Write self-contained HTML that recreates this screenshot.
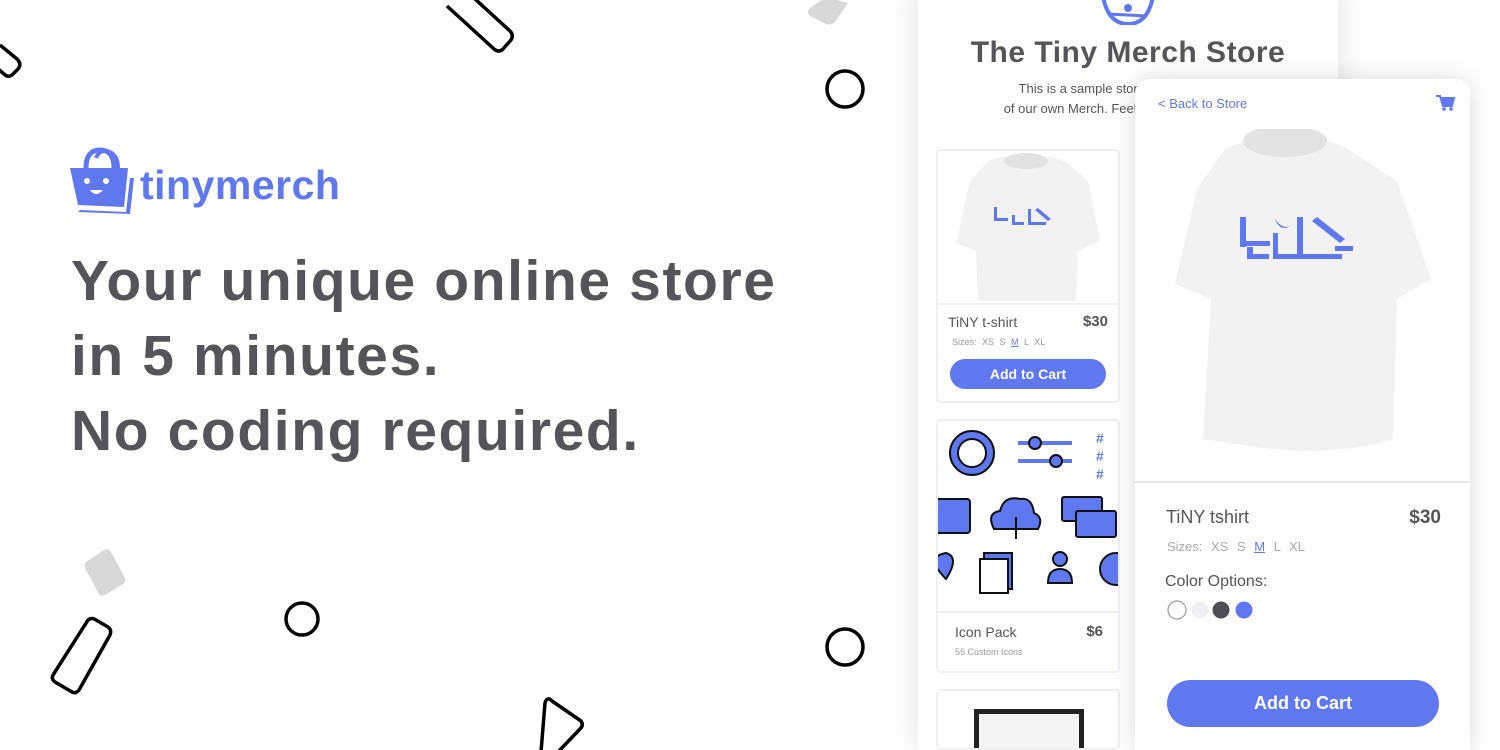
<!DOCTYPE html>
<html style="width:1500px;height:750px;overflow:hidden"><head><meta charset="utf-8"><style>
*{margin:0;padding:0;box-sizing:border-box}
body{width:1500px;height:750px;overflow:hidden;background:#fff;font-family:"Liberation Sans",sans-serif;color:#555459;position:relative}
.abs{position:absolute}
.h1{left:71px;top:244px;font-size:57px;font-weight:bold;line-height:75px;letter-spacing:1.6px;color:#555459}
.back{left:918px;top:-20px;width:420px;height:770px;background:#fff;box-shadow:0 0 30px rgba(0,0,0,.12);overflow:hidden}
.front{left:1135px;top:79px;width:335px;height:671px;background:#fff;border-radius:14px 14px 0 0;box-shadow:0 0 24px rgba(0,0,0,.14);overflow:hidden}
.pc{position:absolute;border:2px solid #f0f0f4;border-radius:5px;background:#fff;overflow:hidden}
.btn{background:#5f78f0;color:#fff;font-weight:bold;text-align:center}
</style></head><body>
<svg class="abs" style="left:0;top:0" width="1500" height="750">
<g fill="none" stroke="#000" stroke-width="3.5" stroke-linejoin="round">
<path d="M447 6 L494 49 Q499 53 503 49 L511 40 Q514 35 510 31 L463 -12"/>
<path d="M0 45 L17 59 Q22 64 18 69 L12 75 Q8 78 4 74 L-10 62"/>
<circle cx="845" cy="89" r="18"/>
<path d="M88 620 Q92 617 96 620 L108 627 Q112 630 110 635 L79 690 Q76 694 72 692 L55 682 Q51 679 53 675 Z"/>
<circle cx="302" cy="619" r="16"/>
<circle cx="845" cy="647" r="18"/>
<path d="M541 752 L545 703 Q547 696 552 701 L581 721 Q584 725 580 729 L558 752"/>
</g>
<path d="M810 8 L826 -3 L848 3 L835 22 Q831 26 826 24 L810 16 Q806 12 810 8Z" fill="#d8d8d8"/>
<path d="M86 562 L104 550 Q109 548 111 552 L125 578 Q126 582 123 584 L105 595 Q101 597 99 594 L85 568 Q84 565 86 562Z" fill="#d8d8d8"/>
<g fill="#5f78f0">
<path d="M70 168 L128 168 L124 207 L78 205 Z"/>
<path d="M80 210 L126 212 L130 178 L134 178 L130 214 L78 212Z"/>
<path d="M86 168 Q86 150 100 150 Q114 150 114 168" fill="none" stroke="#5f78f0" stroke-width="5"/>
<path d="M96 158 Q100 148 110 152 Q118 156 118 168" fill="none" stroke="#5f78f0" stroke-width="4"/>
<circle cx="87" cy="181" r="3" fill="#fff"/><circle cx="106" cy="181" r="3" fill="#fff"/>
<path d="M90 190 Q96 198 103 190Z" fill="#fff"/>
</g>
<text x="140" y="199" font-family="Liberation Sans" font-weight="bold" font-size="41" fill="#5f78f0" letter-spacing="0.5">tinymerch</text>
</svg>
<div class="abs h1">Your unique online store<br>in 5 minutes.<br>No coding required.</div>

<div class="abs back">
<svg class="abs" style="left:180px;top:0" width="60" height="45"><path d="M4 10 Q8 44 30 44 Q52 44 56 10" fill="none" stroke="#5f78f0" stroke-width="4"/><circle cx="30" cy="28" r="4" fill="#5f78f0"/><path d="M10 34 L48 36" stroke="#5f78f0" stroke-width="3"/></svg>
<div class="abs" style="left:0;width:420px;top:56px;text-align:center;font-size:30px;font-weight:bold;letter-spacing:.5px">The Tiny Merch Store</div>
<div class="abs" style="left:0;width:420px;top:99px;text-align:center;font-size:13px;line-height:20px;color:#555">This is a sample store with a selection<br>of our own Merch. Feel free to look around.</div>
<div class="pc" style="left:18px;top:169px;width:184px;height:254px">
<svg class="abs" style="left:0;top:0" width="180" height="152"><path d="M50 10 Q70 2 90 6 Q110 2 130 12 L150 30 L162 90 L140 100 L138 150 L40 150 L38 100 L18 92 L32 30Z" fill="#f2f2f2"/><ellipse cx="88" cy="10" rx="22" ry="8" fill="#e2e2e2"/>
<g fill="#5f78f0"><rect x="56" y="56" width="3" height="14"/><rect x="56" y="67" width="14" height="3"/><rect x="74" y="64" width="3" height="10"/><rect x="74" y="71" width="12" height="3"/><rect x="90" y="58" width="3" height="16"/><rect x="90" y="71" width="18" height="3"/><path d="M100 57 L113 68 L110 70 L97 59Z"/></g></svg>
<div class="abs" style="left:0;top:152px;width:180px;border-top:2px solid #f0f0f4"></div>
<div class="abs" style="left:10px;top:163px;font-size:14px">TiNY t-shirt</div>
<div class="abs" style="right:10px;top:162px;font-size:15px;font-weight:bold">$30</div>
<div class="abs" style="left:14px;top:186px;font-size:9px;color:#999;word-spacing:3px">Sizes: XS S <u style="color:#5f78f0">M</u> L XL</div>
<div class="abs btn" style="left:12px;top:208px;width:156px;height:30px;border-radius:15px;line-height:30px;font-size:14px">Add to Cart</div>
</div>
<div class="pc" style="left:18px;top:439px;width:184px;height:254px">
<svg class="abs" style="left:0;top:0" width="180" height="190" stroke="#111" stroke-width="2">
<circle cx="34" cy="32" r="22" fill="#5f78f0"/><circle cx="34" cy="32" r="14" fill="#fff"/>
<line x1="80" y1="22" x2="134" y2="22" stroke="#5f78f0" stroke-width="4"/><line x1="80" y1="40" x2="134" y2="40" stroke="#5f78f0" stroke-width="4"/><circle cx="97" cy="22" r="6" fill="#5f78f0"/><circle cx="118" cy="40" r="6" fill="#5f78f0"/>
<text x="158" y="22" font-size="14" fill="#5f78f0" stroke="none" font-weight="bold">#</text><text x="158" y="40" font-size="14" fill="#5f78f0" stroke="none" font-weight="bold">#</text><text x="158" y="58" font-size="14" fill="#5f78f0" stroke="none" font-weight="bold">#</text>
<rect x="-4" y="78" width="36" height="34" rx="3" fill="#5f78f0"/>
<path d="M56 108 Q48 92 62 90 Q66 74 82 78 Q94 76 96 92 Q106 96 100 108Z" fill="#5f78f0"/><line x1="78" y1="96" x2="78" y2="118"/>
<rect x="124" y="76" width="40" height="24" rx="2" fill="#5f78f0"/><rect x="138" y="90" width="40" height="26" rx="2" fill="#5f78f0"/>
<path d="M8 158 Q-14 136 8 132 Q22 136 8 158Z" fill="#5f78f0"/>
<rect x="46" y="132" width="28" height="36" fill="#5f78f0"/><rect x="42" y="138" width="28" height="34" fill="#fff"/>
<circle cx="122" cy="138" r="7" fill="#5f78f0"/><path d="M110 162 Q110 148 122 148 Q134 148 134 162Z" fill="#5f78f0"/>
<circle cx="178" cy="148" r="16" fill="#5f78f0"/>
</svg>
<div class="abs" style="left:0;top:190px;width:180px;border-top:2px solid #f0f0f4"></div>
<div class="abs" style="left:17px;top:203px;font-size:14px">Icon Pack</div>
<div class="abs" style="right:15px;top:202px;font-size:15px;font-weight:bold">$6</div>
<div class="abs" style="left:17px;top:226px;font-size:9px;color:#999">55 Custom Icons</div>
</div>
<div class="pc" style="left:18px;top:709px;width:184px;height:61px"><div class="abs" style="left:36px;top:18px;width:110px;height:60px;border:5px solid #222;border-bottom:none;background:#f4f4f4"></div></div>
</div>

<div class="abs front">
<div class="abs" style="left:23px;top:17px;font-size:13px;color:#5f78f0">&lt; Back to Store</div>
<svg class="abs" style="left:300px;top:15px" width="20" height="18"><path d="M1 2 L5 2 L8 12 L17 12 L19 4 L6 4" fill="#5f78f0" stroke="#5f78f0" stroke-width="2"/><circle cx="9" cy="15" r="1.8" fill="#5f78f0"/><circle cx="16" cy="15" r="1.8" fill="#5f78f0"/></svg>
<svg class="abs" style="left:0;top:50px" width="335" height="330"><path d="M90 20 Q120 6 150 10 Q180 6 210 18 L262 52 L296 150 L262 170 L258 310 Q200 328 120 318 L68 310 L76 170 L40 155 L62 60Z" fill="#f2f2f2"/><ellipse cx="150" cy="12" rx="42" ry="16" fill="#e3e3e3"/>
<g fill="#5f78f0"><rect x="105" y="88" width="6" height="30"/><rect x="105" y="112" width="30" height="5"/><rect x="112" y="118" width="6" height="12"/><rect x="112" y="125" width="22" height="5"/><rect x="138" y="104" width="5" height="26"/><rect x="138" y="125" width="24" height="5"/><path d="M140 90 Q145 104 158 96 Q148 102 140 90Z"/><rect x="162" y="88" width="6" height="42"/><rect x="162" y="125" width="45" height="5"/><path d="M182 88 L210 110 L205 114 L177 92Z"/><rect x="200" y="117" width="18" height="5"/></g></svg>
<div class="abs" style="left:0;top:402px;width:335px;border-top:2px solid #e6e6ec"></div>
<div class="abs" style="left:31px;top:428px;font-size:18px">TiNY tshirt</div>
<div class="abs" style="right:29px;top:428px;font-size:19px;font-weight:bold">$30</div>
<div class="abs" style="left:32px;top:460px;font-size:13px;color:#aaa;word-spacing:5px">Sizes: XS S <u style="color:#5f78f0">M</u> L XL</div>
<div class="abs" style="left:30px;top:494px;font-size:16px">Color Options:</div>
<svg class="abs" style="left:30px;top:520px" width="100" height="24"><circle cx="12" cy="11" r="9" fill="#fff" stroke="#999" stroke-width="1.2"/><circle cx="35" cy="11" r="8.5" fill="#eeeef3"/><circle cx="56" cy="11" r="8.5" fill="#4f4e54"/><circle cx="79" cy="11" r="8.5" fill="#5f78f0"/></svg>
<div class="abs btn" style="left:32px;top:601px;width:272px;height:47px;border-radius:24px;line-height:47px;font-size:18px">Add to Cart</div>
</div>
</body></html>
